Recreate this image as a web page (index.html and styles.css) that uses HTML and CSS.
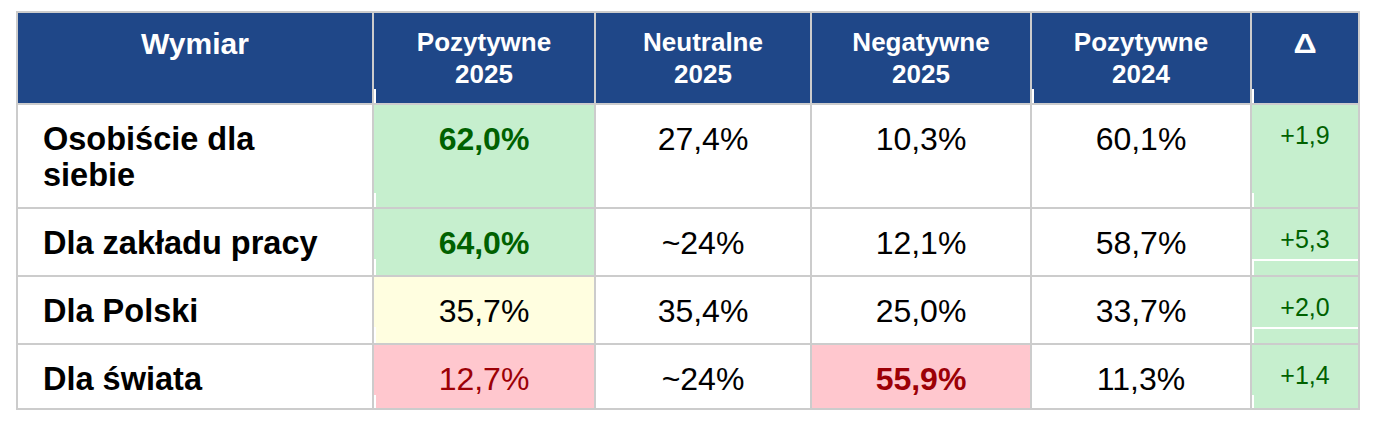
FILE: index.html
```html
<!DOCTYPE html>
<html lang="pl">
<head>
<meta charset="utf-8">
<title>Wymiar</title>
<link rel="stylesheet" href="styles.css">
</head>
<body>
<div class="table">
  <div class="cell head head--first">Wymiar</div>
  <div class="cell head nick">Pozytywne<br>2025</div>
  <div class="cell head">Neutralne<br>2025</div>
  <div class="cell head">Negatywne<br>2025</div>
  <div class="cell head nick">Pozytywne<br>2024</div>
  <div class="cell head head--delta nick"><span class="delta-sign">Δ</span></div>

  <div class="cell label">Osobiście dla<br>siebie</div>
  <div class="cell val good strong nick">62,0%</div>
  <div class="cell val">27,4%</div>
  <div class="cell val">10,3%</div>
  <div class="cell val">60,1%</div>
  <div class="cell delta good nick">+1,9</div>

  <div class="cell label">Dla zakładu pracy</div>
  <div class="cell val good strong nick nick--tall">64,0%</div>
  <div class="cell val">~24%</div>
  <div class="cell val">12,1%</div>
  <div class="cell val">58,7%</div>
  <div class="cell delta good seam">+5,3</div>

  <div class="cell label">Dla Polski</div>
  <div class="cell val neutral nick nick--tall">35,7%</div>
  <div class="cell val">35,4%</div>
  <div class="cell val">25,0%</div>
  <div class="cell val">33,7%</div>
  <div class="cell delta good seam">+2,0</div>

  <div class="cell label">Dla świata</div>
  <div class="cell val bad nick nick--short">12,7%</div>
  <div class="cell val">~24%</div>
  <div class="cell val bad strong">55,9%</div>
  <div class="cell val">11,3%</div>
  <div class="cell delta good nick nick--short">+1,4</div>
</div>
</body>
</html>
```
FILE: styles.css
```css
html, body {
  margin: 0;
  padding: 0;
  background: #ffffff;
}

body {
  font-family: "Liberation Sans", Arial, Helvetica, sans-serif;
  color: #000000;
  padding: 11px 0 0 16px;
}

.table {
  display: grid;
  grid-template-columns: 354px 220px 214px 218px 218px 106px;
  grid-template-rows: 90px 102px 66px 66px 63px;
  gap: 2px;
  padding: 2px;
  background: #cccccc;
  width: max-content;
}

.cell {
  background-color: #ffffff;
  text-align: center;
  padding-top: 17px;
  box-sizing: border-box;
}

.head {
  background-color: #1f4788;
  color: #ffffff;
  font-weight: bold;
  font-size: 26px;
  line-height: 32px;
  padding-top: 13px;
}

.head--first {
  font-size: 30px;
  padding-top: 15px;
}

.head--delta {
  font-size: 28px;
  padding-top: 15px;
}

.delta-sign {
  display: inline-block;
  transform: scaleX(1.15);
}

.label {
  text-align: left;
  font-weight: bold;
  font-size: 32.5px;
  line-height: 35.5px;
  padding-left: 25px;
}

.val {
  font-size: 32px;
  line-height: 35.5px;
}

.delta {
  font-size: 25px;
  line-height: 26px;
  color: #006100;
}

.strong {
  font-weight: bold;
}

.good {
  background-color: #c6efce;
  color: #006100;
}

.neutral {
  background-color: #fffee0;
  color: #000000;
}

.bad {
  background-color: #ffc7ce;
  color: #9c0006;
}

.nick {
  background-image: linear-gradient(#ffffff, #ffffff);
  background-repeat: no-repeat;
  background-size: 2px 14px;
  background-position: left bottom;
}

.nick--tall {
  background-size: 2px 16px;
}

.nick--short {
  background-size: 2px 13px;
}

.seam {
  background-image: linear-gradient(#ffffff, #ffffff), linear-gradient(#ffffff, #ffffff);
  background-repeat: no-repeat;
  background-size: 100% 2px, 2px 16px;
  background-position: 0 calc(100% - 14px), left bottom;
}
```
